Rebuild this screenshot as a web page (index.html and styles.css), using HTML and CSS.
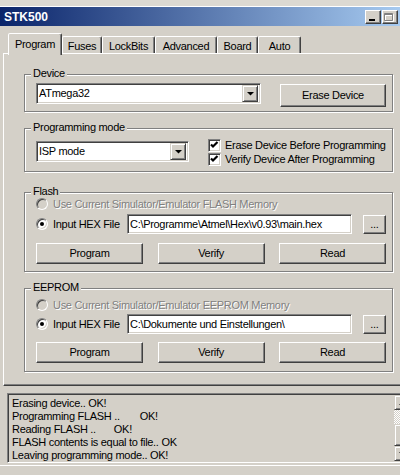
FILE: index.html
```html
<!DOCTYPE html>
<html>
<head>
<meta charset="utf-8">
<link rel="stylesheet" href="styles.css">
</head>
<body>
<div class="topstrip"></div>
<div class="titlebar">
  <span class="title">STK500</span>
  <div class="tbtns">
    <span class="tbtn"><svg width="14" height="12" viewBox="0 0 14 12"><rect x="3" y="8" width="6" height="2" fill="#000"/></svg></span>
    <span class="tbtn"><svg width="14" height="12" viewBox="0 0 14 12"><path d="M2.5 3.5h8v7h-8z M2.5 4.5h8" fill="none" stroke="#fff"/><path d="M1.5 2.5h8v7h-8z M1.5 3.5h8" fill="none" stroke="#808080"/></svg></span>
  </div>
</div>
<div class="client">
  <div class="tabs">
    <div class="tab active w-program">Program</div>
    <div class="tab w-fuses">Fuses</div>
    <div class="tab w-lockbits">LockBits</div>
    <div class="tab w-advanced">Advanced</div>
    <div class="tab w-board">Board</div>
    <div class="tab w-auto">Auto</div>
  </div>
  <div class="panel">
    <div class="group g-device">
      <span class="group-label">Device</span>
      <div class="row-device">
        <div class="combo combo-device"><span class="combo-text">ATmega32</span><span class="drop"><svg width="7" height="4" viewBox="0 0 7 4"><polygon points="0,0 7,0 3.5,3.5" fill="#000"/></svg></span></div>
        <div class="btn btn-erase">Erase Device</div>
      </div>
    </div>
    <div class="group g-mode">
      <span class="group-label">Programming mode</span>
      <div class="row-mode">
        <div class="combo combo-mode"><span class="combo-text">ISP mode</span><span class="drop"><svg width="7" height="4" viewBox="0 0 7 4"><polygon points="0,0 7,0 3.5,3.5" fill="#000"/></svg></span></div>
        <div class="checks">
          <div class="check-row"><span class="checkbox"><svg width="9" height="9" viewBox="0 0 9 9"><polyline points="1,3.5 3,5.5 7.5,1" fill="none" stroke="#000" stroke-width="2.2"/></svg></span>Erase Device Before Programming</div>
          <div class="check-row"><span class="checkbox"><svg width="9" height="9" viewBox="0 0 9 9"><polyline points="1,3.5 3,5.5 7.5,1" fill="none" stroke="#000" stroke-width="2.2"/></svg></span>Verify Device After Programming</div>
        </div>
      </div>
    </div>
    <div class="group g-flash">
      <span class="group-label">Flash</span>
      <div class="radio-row"><span class="radio disabled"></span><span class="dis-text">Use Current Simulator/Emulator FLASH Memory</span></div>
      <div class="file-row">
        <div class="file-label"><span class="radio on"></span>Input HEX File</div>
        <div class="field">C:\Programme\Atmel\Hex\v0.93\main.hex</div>
        <div class="btn btn-browse">...</div>
      </div>
      <div class="btn-row">
        <div class="btn">Program</div>
        <div class="btn">Verify</div>
        <div class="btn">Read</div>
      </div>
    </div>
    <div class="group g-eeprom">
      <span class="group-label">EEPROM</span>
      <div class="radio-row"><span class="radio disabled"></span><span class="dis-text">Use Current Simulator/Emulator EEPROM Memory</span></div>
      <div class="file-row">
        <div class="file-label"><span class="radio on"></span>Input HEX File</div>
        <div class="field">C:\Dokumente und Einstellungen\</div>
        <div class="btn btn-browse">...</div>
      </div>
      <div class="btn-row">
        <div class="btn">Program</div>
        <div class="btn">Verify</div>
        <div class="btn">Read</div>
      </div>
    </div>
  </div>
  <div class="log">
    <div class="log-text">
      <div>Erasing device.. OK!</div>
      <div>Programming FLASH ..<span class="gap1">OK!</span></div>
      <div>Reading FLASH ..<span class="gap2">OK!</span></div>
      <div>FLASH contents is equal to file.. OK</div>
      <div>Leaving programming mode.. OK!</div>
    </div>
    <div class="scrollbar">
      <span class="sb-btn"><svg width="7" height="4" viewBox="0 0 7 4"><polygon points="0,4 7,4 3.5,0.5" fill="#000"/></svg></span>
      <span class="sb-track"></span>
      <span class="sb-thumb"></span>
      <span class="sb-btn"><svg width="7" height="4" viewBox="0 0 7 4"><polygon points="0,0 7,0 3.5,3.5" fill="#000"/></svg></span>
    </div>
  </div>
  <div class="footer"></div>
</div>
</body>
</html>
```
FILE: styles.css
```css
* { box-sizing: border-box; }
html, body { margin: 0; padding: 0; }
body {
  width: 400px;
  height: 475px;
  overflow: hidden;
  background: #d4d0c8;
  font-family: "Liberation Sans", Arial, sans-serif;
  font-size: 11px;
  letter-spacing: -0.3px;
  color: #000;
}
.topstrip { height: 7px; background: #dcd9d2; border-bottom: 1px solid #fff; }
.titlebar {
  height: 19px;
  display: flex;
  align-items: center;
  padding-left: 4px;
  background: linear-gradient(to right, #0a246a, #a6caf0);
}
.title { flex: 1; color: #fff; font-weight: bold; font-size: 12px; letter-spacing: 0; }
.tbtns { display: flex; gap: 1px; margin-right: 2px; }
.tbtn {
  width: 16px; height: 14px;
  background: #d4d0c8;
  border: 1px solid;
  border-color: #fff #404040 #404040 #fff;
  box-shadow: inset -1px -1px #808080;
  display: block;
}
.tbtn svg { display: block; }

.client { padding: 7px 0 0 3px; }
.tabs { display: flex; align-items: flex-end; height: 20px; margin-left: 5px; }
.tab {
  height: 17px;
  border: 1px solid;
  border-bottom: 0;
  border-color: #fff #404040 transparent #fff;
  box-shadow: inset -1px 0 #808080;
  border-radius: 2px 2px 0 0;
  padding-top: 3px;
  line-height: 13px;
  text-align: center;
  white-space: nowrap;
}
.tab.active {
  height: 22px;
  padding-top: 4px;
  margin-bottom: -2px;
  position: relative;
  z-index: 1;
  background: #d4d0c8;
}
.w-program { width: 54px; }
.w-fuses { width: 40px; }
.w-lockbits { width: 53px; }
.w-advanced { width: 62px; }
.w-board { width: 41px; }
.w-auto { width: 43px; }

.panel {
  width: 397px;
  border-top: 1px solid #fff;
  border-left: 1px solid #fff;
  border-bottom: 1px solid #404040;
  box-shadow: inset 0 -1px #808080;
  padding: 0 0 13px 20px;
}
.group {
  position: relative;
  width: 369px;
  border: 1px solid #808080;
  box-shadow: 1px 1px 0 #fff, inset 1px 1px 0 #fff;
  padding: 0 6px 0 11px;
}
.group-label {
  position: absolute;
  top: -8px;
  left: 6px;
  padding: 0 2px;
  background: #d4d0c8;
  line-height: 13px;
}
.g-device { margin-top: 20px; padding-top: 8px; padding-bottom: 4px; }
.g-mode { margin-top: 16px; padding-top: 9px; padding-bottom: 5px; }
.g-flash { margin-top: 20px; padding-top: 4px; padding-bottom: 7px; }
.g-eeprom { margin-top: 16px; padding-top: 9px; padding-bottom: 8px; }

.row-device { display: flex; align-items: flex-start; height: 24px; }
.row-mode { display: flex; align-items: flex-start; }

.combo {
  height: 21px;
  display: flex;
  align-items: center;
  background: #fff;
  border: 1px solid;
  border-color: #808080 #fff #fff #808080;
  box-shadow: inset 1px 1px #404040, inset -1px -1px #d4d0c8;
  padding: 2px;
}
.combo-device { width: 225px; }
.combo-mode { width: 153px; margin-top: 3px; }
.combo-text { flex: 1; line-height: 13px; }
.drop {
  width: 16px;
  height: 17px;
  display: flex;
  align-items: center;
  justify-content: center;
  background: #d4d0c8;
  border: 1px solid;
  border-color: #d4d0c8 #404040 #404040 #d4d0c8;
  box-shadow: inset 1px 1px #fff, inset -1px -1px #808080;
}
.drop svg { display: block; }

.btn {
  height: 21px;
  display: flex;
  align-items: center;
  justify-content: center;
  background: #d4d0c8;
  border: 1px solid;
  border-color: #fff #404040 #404040 #fff;
  box-shadow: inset -1px -1px #808080;
  line-height: 13px;
}
.btn-erase { width: 106px; height: 23px; margin-left: auto; margin-top: 1px; }

.checks { margin-left: 19px; }
.check-row { display: flex; align-items: center; height: 14px; }
.checkbox {
  width: 13px; height: 13px;
  margin-right: 4px;
  background: #fff;
  border: 1px solid;
  border-color: #808080 #fff #fff #808080;
  box-shadow: inset 1px 1px #404040, inset -1px -1px #d4d0c8;
  display: flex;
  align-items: center;
  justify-content: center;
}
.checkbox svg { display: block; }

.radio-row { display: flex; align-items: center; height: 14px; }
.radio {
  width: 12px; height: 12px;
  margin-right: 5px;
  border-radius: 50%;
  background: #fff;
  border: 1px solid;
  border-color: #808080 #fff #fff #808080;
  box-shadow: inset 1px 1px #404040, inset -1px -1px #d4d0c8;
  display: flex;
  align-items: center;
  justify-content: center;
  flex: none;
}
.radio.on::after {
  content: "";
  width: 4px; height: 4px;
  border-radius: 50%;
  background: #000;
}
.radio.disabled { background: #d4d0c8; }
.dis-text { color: #808080; text-shadow: 1px 1px 0 #fff; }

.file-row { display: flex; align-items: center; height: 20px; margin-top: 3px; }
.g-eeprom .file-row { margin-top: 2px; }
.file-label { width: 91px; display: flex; align-items: center; white-space: nowrap; }
.field {
  width: 225px;
  height: 20px;
  display: flex;
  align-items: center;
  background: #fff;
  border: 1px solid;
  border-color: #808080 #fff #fff #808080;
  box-shadow: inset 1px 1px #404040, inset -1px -1px #d4d0c8;
  padding-left: 2px;
  white-space: nowrap;
  overflow: hidden;
}
.btn-browse { width: 23px; height: 19px; margin-left: auto; }

.btn-row {
  display: grid;
  grid-template-columns: 107px 107px 107px;
  justify-content: space-between;
  margin-top: 9px;
}
.g-eeprom .btn-row { margin-top: 8px; }

.log {
  margin: 7px 0 0 4px;
  width: 393px;
  height: 70px;
  display: flex;
  overflow: hidden;
  border: 1px solid;
  border-right: 0;
  border-color: #808080 #fff #fff #808080;
  box-shadow: inset 1px 1px #404040;
}
.log-text {
  width: 386px;
  flex: none;
  padding: 3px 0 0 4px;
  line-height: 13px;
  overflow: hidden;
  white-space: nowrap;
}
.gap1 { margin-left: 20px; }
.gap2 { margin-left: 18px; }
.scrollbar { width: 16px; flex: none; display: flex; flex-direction: column; padding-top: 1px; }
.sb-btn, .sb-thumb {
  display: flex;
  align-items: center;
  justify-content: center;
  background: #d4d0c8;
  border: 1px solid;
  border-color: #d4d0c8 #404040 #404040 #d4d0c8;
  box-shadow: inset 1px 1px #fff, inset -1px -1px #808080;
}
.sb-btn { height: 15px; }
.sb-btn svg { display: block; }
.sb-track {
  height: 14px;
  background-color: #d4d0c8;
  background-image: repeating-conic-gradient(#fff 0 25%, #d4d0c8 0 50%);
  background-size: 2px 2px;
}
.sb-thumb { height: 22px; }
.footer { margin-top: 2px; margin-left: -3px; border-top: 1px solid #fff; height: 10px; }
```
